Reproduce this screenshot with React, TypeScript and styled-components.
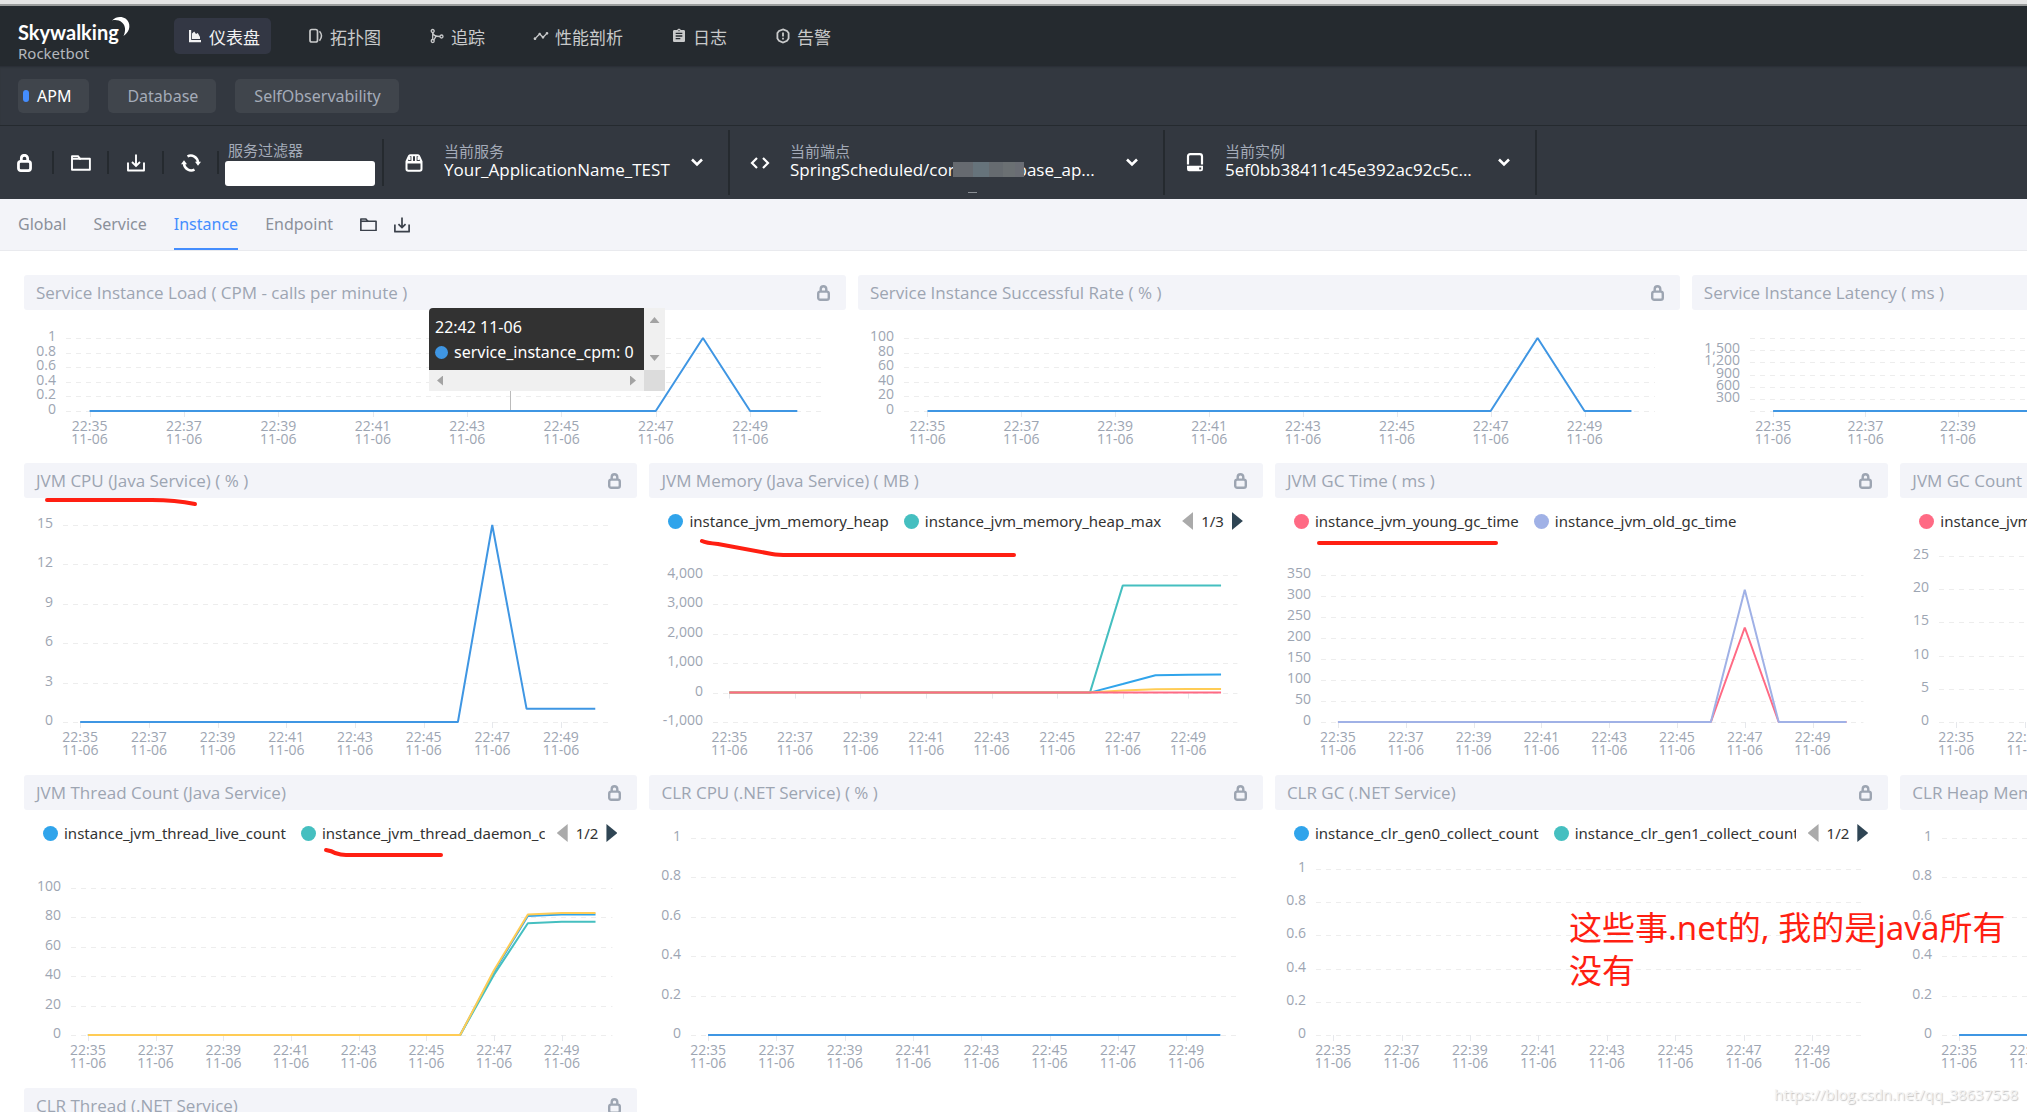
import React, { useLayoutEffect, useRef, useState } from 'react';
import styled, { createGlobalStyle } from 'styled-components';
import { MdAssignment, MdTimeline } from 'react-icons/md';

const FONT = '"Noto Sans", "Noto Sans CJK SC", sans-serif';
const FONT_NARROW = '"Open Sans", "Noto Sans CJK SC", sans-serif';

const GlobalStyle = createGlobalStyle`
  *, *::before, *::after { box-sizing: border-box; }
  body { margin: 0; background: #fff; font-family: ${FONT}; font-size: 16px; }
  button, input, select { font-family: inherit; }
`;

/* ---------- data ---------- */

type Series = { color: string; values: number[] };
type LegendItem = { color: string; name: string };
type Panel = {
  title: string;
  left: number;
  top: number;
  min: number;
  max: number;
  step: number;
  hideEnds?: boolean;
  series: Series[];
  legend?: LegendItem[];
  page?: string;
  tooltip?: boolean;
};

const C = {
  line: '#3f96e3',
  blue: '#30a4eb',
  teal: '#45bfc0',
  yellow: '#ffcc55',
  red: '#ff6a84',
  purple: '#a0b1e6',
};

const flat = (head: number, tail: number[] = []) => [
  ...Array(16 - tail.length).fill(head),
  ...tail,
];

const TOP_ROW: Panel[] = [
  {
    title: 'Service Instance Load ( CPM - calls per minute )',
    left: 42, top: 28, min: 0, max: 1, step: 0.2,
    series: [{ color: C.line, values: flat(0, [1, 0, 0]) }],
    tooltip: true,
  },
  {
    title: 'Service Instance Successful Rate ( % )',
    left: 46, top: 28, min: 0, max: 100, step: 20,
    series: [{ color: C.line, values: flat(0, [100, 0, 0]) }],
  },
  {
    title: 'Service Instance Latency ( ms )',
    left: 58, top: 28, min: 0, max: 1800, step: 300, hideEnds: true,
    series: [{ color: C.line, values: flat(0, [1700, 0, 0]) }],
  },
];

const JVM_ROW: Panel[] = [
  {
    title: 'JVM CPU (Java Service) ( % )',
    left: 39, top: 27, min: 0, max: 15, step: 3,
    series: [{ color: C.line, values: flat(0, [15, 1, 1, 1]) }],
  },
  {
    title: 'JVM Memory (Java Service) ( MB )',
    left: 64, top: 31, min: -1000, max: 4000, step: 1000,
    legend: [
      { color: C.blue, name: 'instance_jvm_memory_heap' },
      { color: C.teal, name: 'instance_jvm_memory_heap_max' },
    ],
    page: '1/3',
    series: [
      { color: C.blue, values: flat(0, [290, 590, 610, 615]) },
      { color: C.teal, values: flat(0, [3640, 3640, 3640, 3640]) },
      { color: C.yellow, values: flat(0, [70, 115, 120, 125]) },
      { color: C.red, values: flat(0) },
    ],
  },
  {
    title: 'JVM GC Time ( ms )',
    left: 46, top: 31, min: 0, max: 350, step: 50,
    legend: [
      { color: C.red, name: 'instance_jvm_young_gc_time' },
      { color: C.purple, name: 'instance_jvm_old_gc_time' },
    ],
    series: [
      { color: C.red, values: flat(0, [225, 0, 0, 0]) },
      { color: C.purple, values: flat(0, [315, 0, 0, 0]) },
    ],
  },
  {
    title: 'JVM GC Count',
    left: 39, top: 12, min: 0, max: 25, step: 5,
    legend: [
      { color: C.red, name: 'instance_jvm_young_gc_count' },
      { color: C.purple, name: 'instance_jvm_old_gc_count' },
    ],
    series: [],
  },
];

const CLR_ROW: Panel[] = [
  {
    title: 'JVM Thread Count (Java Service)',
    left: 47, top: 32, min: 0, max: 100, step: 20,
    legend: [
      { color: C.blue, name: 'instance_jvm_thread_live_count' },
      { color: C.teal, name: 'instance_jvm_thread_daemon_count' },
    ],
    page: '1/2',
    series: [
      { color: C.blue, values: flat(0, [43, 81, 82, 82]) },
      { color: C.teal, values: flat(0, [41, 76, 77, 77]) },
      { color: C.yellow, values: flat(0, [44, 82, 83, 83]) },
    ],
  },
  {
    title: 'CLR CPU (.NET Service) ( % )',
    left: 42, top: 28, min: 0, max: 1, step: 0.2,
    series: [{ color: C.line, values: flat(0) }],
  },
  {
    title: 'CLR GC (.NET Service)',
    left: 41, top: 13, min: 0, max: 1, step: 0.2,
    legend: [
      { color: C.blue, name: 'instance_clr_gen0_collect_count' },
      { color: C.teal, name: 'instance_clr_gen1_collect_count' },
    ],
    page: '1/2',
    series: [],
  },
  {
    title: 'CLR Heap Memory (.NET Service) ( MB )',
    left: 42, top: 28, min: 0, max: 1, step: 0.2,
    series: [{ color: C.line, values: flat(0) }],
  },
];

/* ---------- icons ---------- */

const LockIcon = ({ w, h }: { w: number; h: number }) => (
  <svg width={w} height={h} viewBox="0 0 14 17" fill="none" stroke="currentColor">
    <rect x="1.3" y="7" width="11.4" height="8.7" rx="2.2" strokeWidth="2.6" />
    <path d="M4 7V4.2C4 2.4 5.3 1.2 7 1.2s3 1.2 3 3V7" strokeWidth="2.6" />
  </svg>
);
const FolderIcon = ({ w }: { w: number }) => (
  <svg width={w} height={w * 0.8} viewBox="0 0 20 16" fill="none" stroke="currentColor" strokeWidth="1.9" strokeLinejoin="round">
    <path d="M1 14.8V1.2h6l2 2.6h9.900v11z" />
    <path d="M1 3.800h9" />
  </svg>
);
const DownloadIcon = ({ w }: { w: number }) => (
  <svg width={w} height={w} viewBox="0 0 18 18" fill="none" stroke="currentColor" strokeWidth="1.9">
    <path d="M1 8.500V16.500h16V8.500" strokeLinejoin="round" />
    <path d="M9 .5v11M5 8l4 4 4-4" />
  </svg>
);
const RefreshIcon = () => (
  <svg width="20" height="18" viewBox="0 0 20 18" fill="none" stroke="currentColor" strokeWidth="2.500">
    <path d="M6.500 2.300A7.300 7.300 0 0 1 17 8.500" />
    <path d="M13.500 15.700A7.300 7.300 0 0 1 3 9.500" />
    <path d="M14 7.800h6L17 11.800zM0 10.200h6L3 6.200z" fill="currentColor" stroke="none" />
  </svg>
);
const ServiceIcon = () => (
  <svg width="18" height="18" viewBox="0 0 18 18" fill="none" stroke="currentColor" strokeWidth="2">
    <path d="M1.500 7.500 4 2Q4.500 1.200 5.500 1.200h7Q13.500 1.200 14 2l2.500 5.500V15Q16.500 16.800 14.700 16.800H3.300Q1.500 16.800 1.500 15z" />
    <path d="M1.500 8.200h15" strokeWidth="2.600" />
    <path d="M7.200 1v6M10.800 1v6" strokeWidth="1.600" />
    <path d="M3.500 3h2v3h-2zM12.500 3h2v3h-2z" fill="currentColor" stroke="none" />
  </svg>
);
const CodeIcon = () => (
  <svg width="20" height="12" viewBox="0 0 20 12" fill="none" stroke="currentColor" strokeWidth="2.200">
    <path d="M7 1 2 6l5 5M13 1l5 5-5 5" />
  </svg>
);
const DiskIcon = () => (
  <svg width="18" height="19" viewBox="0 0 18 19" fill="none" stroke="currentColor" strokeWidth="2.200">
    <path d="M2 11.500V3.500Q2 1.200 4.300 1.200h9.400Q16 1.200 16 3.500v8" />
    <path fillRule="evenodd" fill="currentColor" stroke="none" d="M1 12.800h16v3.200q0 2.200-2 2.200H3q-2 0-2-2.200zM13.200 14.400v2h2v-2z" />
  </svg>
);
const ChevronIcon = () => (
  <svg width="12" height="9" viewBox="0 0 12 9" fill="none" stroke="currentColor" strokeWidth="2.600">
    <path d="M1 1.500l5 5 5-5" />
  </svg>
);
const AreaIcon = () => (
  <svg width="16" height="14" viewBox="0 0 16 14" fill="currentColor">
    <path d="M2 1h2.200v10H14v2.200H2z" />
    <path d="M5 10V4.500L7.200 2.500 9 5l1.800-1 2.200 4v2z" />
  </svg>
);
const TopologyIcon = () => (
  <svg width="16" height="16" viewBox="0 0 16 16" fill="none" stroke="currentColor" strokeWidth="1.700">
    <rect x="2" y="1.500" width="7.500" height="12.500" rx="1.800" />
    <path d="M11.500 3.200q4 4.500 0 9.600" strokeWidth="1.500" />
  </svg>
);
const TraceIcon = () => (
  <svg width="16" height="16" viewBox="0 0 16 16" fill="none" stroke="currentColor" strokeWidth="1.300">
    <circle cx="3.700" cy="3" r="1.500" />
    <circle cx="3.700" cy="13" r="1.500" />
    <circle cx="12.500" cy="8.500" r="1.500" />
    <path d="M3.700 4.500v7M3.700 5Q4.500 8.500 11 8.500M4.800 12 7 8.300" />
  </svg>
);
const AlarmIcon = () => (
  <svg width="16" height="16" viewBox="0 0 16 16" fill="none" stroke="currentColor" strokeWidth="1.800">
    <path d="M8 1.400 12 3 13.600 5v5.500L12 12.800 8 14.500 4 12.800 2.400 10.500V5L4 3z" />
    <path d="M8 4.500v4M8 9.800v1.800" />
  </svg>
);
const MoonIcon = styled.svg`
  position: absolute;
  left: 94px;
  top: 5px;
`;

/* ---------- header ---------- */

const Page = styled.div`
  position: relative;
  height: 100vh;
  overflow: hidden;
  background: #fff;
`;
const WindowEdge = styled.div`
  height: 6px;
  background: #e4e4e4;
  border-bottom: 2px solid #9a9c9c;
`;
const Header = styled.header`
  display: flex;
  align-items: center;
  height: 60px;
  padding: 0 18px;
  background: #252a2f;
`;
const Brand = styled.a`
  position: relative;
  display: block;
  width: 156px;
  padding-top: 8px;
  color: #fff;
  text-decoration: none;
`;
const BrandName = styled.div`
  font-family: Lato, ${FONT};
  font-size: 20px;
  font-weight: 700;
  line-height: 26px;
`;
const BrandSub = styled.div`
  font-size: 15px;
  line-height: 16px;
  color: #b4b7bd;
`;
const Nav = styled.nav`
  display: flex;
  gap: 24px;
`;
const NavLink = styled.a<{ $active?: boolean }>`
  display: flex;
  align-items: center;
  gap: 6px;
  height: 36px;
  padding: 0 11px 0 13px;
  border-radius: 5px;
  font-size: 17px;
  text-decoration: none;
  color: ${(p) => (p.$active ? '#f2f2f3' : '#c9cacb')};
  background: ${(p) => (p.$active ? '#333744' : 'transparent')};
`;

const GroupBar = styled.div`
  display: flex;
  align-items: center;
  gap: 19px;
  height: 60px;
  padding: 0 18px;
  background: #333840;
  border-bottom: 1px solid #252a2f;
  box-shadow: inset 0 2px 2px -1px #292e34;
`;
const GroupButton = styled.button<{ $active?: boolean }>`
  position: relative;
  height: 34px;
  padding: 0 18px 0 19px;
  border: 0;
  border-radius: 5px;
  font-size: 16px;
  color: ${(p) => (p.$active ? '#fff' : '#a4abb8')};
  background: #40454c;
  ${(p) =>
    p.$active &&
    `&::before {
      content: '';
      position: absolute;
      left: 5px;
      top: 11px;
      width: 6px;
      height: 12px;
      border-radius: 3px;
      background: #448dfe;
    }`}
`;

/* ---------- toolbar ---------- */

const Toolbar = styled.div`
  display: flex;
  align-items: center;
  height: 73px;
  background: #333840;
  color: #fff;
`;
const ToolCell = styled.div`
  display: flex;
  justify-content: center;
  width: 55px;
  height: 23px;
  border-right: 2px solid #252a2f;
  &:first-child { width: 54px; padding-right: 4px; }
`;
const IconButton = styled.button`
  display: flex;
  align-items: center;
  justify-content: center;
  padding: 0;
  border: 0;
  background: none;
  color: inherit;
`;
const Filter = styled.label`
  display: flex;
  flex-direction: column;
  gap: 2px;
  height: 47px;
  padding: 2px 7px 0 6px;
  border-right: 2px solid #252a2f;
`;
const Caption = styled.span`
  padding: 0 3px;
  font-size: 15px;
  line-height: 18px;
  color: #a4abb8;
`;
const FilterInput = styled.input`
  flex: none;
  width: 150px;
  height: 25px;
  border: 0;
  border-radius: 3px;
  background: #fff;
`;
const Picker = styled.label<{ $width: number }>`
  position: relative;
  display: flex;
  align-items: center;
  width: ${(p) => p.$width}px;
  height: 65px;
  padding: 0 25px 0 20px;
  border-right: 2px solid #252a2f;
`;
const PickerIcon = styled.span`
  display: flex;
  justify-content: center;
  width: 20px;
  margin-right: 17px;
`;
const PickerBody = styled.span`
  display: flex;
  flex: 1;
  flex-direction: column;
  min-width: 0;
  padding-bottom: 4px;
`;
const PickerSelect = styled.select`
  appearance: none;
  width: 100%;
  height: 20px;
  padding: 0 3px;
  border: 0;
  font-family: ${FONT_NARROW};
  font-size: 17px;
  line-height: 20px;
  color: #fff;
  background: none;
`;
const Mosaic = styled.span`
  position: absolute;
  left: 223px;
  top: 32px;
  width: 71px;
  height: 15px;
  background: linear-gradient(90deg, #666a70 0 20px, #66737b 20px 36px, #666b70 36px 50px, #6b7073 50px 62px, #6a6d74 62px);
  &::after {
    content: '';
    position: absolute;
    left: 15px;
    top: 30px;
    width: 9px;
    height: 1px;
    background: #8b8f95;
  }
`;

/* ---------- tabs ---------- */

const Tabs = styled.nav`
  display: flex;
  align-items: center;
  gap: 27px;
  height: 52px;
  padding: 0 18px;
  background: #f3f4f9;
  border-bottom: 1px solid #e9eaee;
`;
const Tab = styled.a<{ $active?: boolean }>`
  height: 51px;
  font-size: 16px;
  line-height: 50px;
  text-decoration: none;
  color: ${(p) => (p.$active ? '#448dfe' : '#8b909a')};
  border-bottom: 2px solid ${(p) => (p.$active ? '#448dfe' : 'transparent')};
`;
const TabTools = styled.div`
  display: flex;
  gap: 17px;
  color: #3a404b;
`;

/* ---------- dashboard ---------- */

const Dashboard = styled.main`
  display: flex;
  flex-direction: column;
  gap: 12px;
  width: 125vw;
  padding: 24px 20px 0 24px;
`;
const Row = styled.div<{ $cols: number }>`
  display: grid;
  grid-template-columns: repeat(${(p) => p.$cols}, minmax(0, 1fr));
  gap: 12px;
`;
const Card = styled.section`
  position: relative;
`;
const CardHead = styled.div`
  display: flex;
  align-items: center;
  justify-content: space-between;
  height: 35px;
  padding: 0 16px 0 12px;
  border-radius: 3px;
  color: #9da5b2;
  background: #f3f4f9;
`;
const CardTitle = styled.h2`
  margin: 0;
  font-family: ${FONT_NARROW};
  font-size: 17px;
  font-weight: 400;
  line-height: 23px;
`;
const Legend = styled.div`
  display: flex;
  align-items: center;
  height: 46px;
  padding: 0 20px 0 19px;
`;
const LegendList = styled.div`
  display: flex;
  flex: 1;
  gap: 15px;
  min-width: 0;
  overflow: hidden;
`;
const LegendButton = styled.button`
  display: flex;
  flex: none;
  align-items: center;
  gap: 6px;
  padding: 0;
  border: 0;
  background: none;
  font-size: 15px;
  line-height: 22px;
  color: #333;
`;
const Dot = styled.span<{ $color: string; $size: number }>`
  flex: none;
  width: ${(p) => p.$size}px;
  height: ${(p) => p.$size}px;
  border-radius: 50%;
  background: ${(p) => p.$color};
`;
const Pager = styled.div`
  display: flex;
  align-items: center;
  gap: 8px;
  padding-left: 12px;
  font-size: 15px;
  color: #333;
`;
const PageArrow = styled.button<{ $next?: boolean }>`
  width: 11px;
  height: 18px;
  padding: 0;
  border: 0;
  background: ${(p) => (p.$next ? '#2f4554' : '#aaa')};
  clip-path: ${(p) => (p.$next ? 'polygon(0 0, 100% 50%, 0 100%)' : 'polygon(100% 0, 0 50%, 100% 100%)')};
`;
const Plot = styled.svg`
  display: block;
  width: 100%;
  font-family: ${FONT_NARROW};
  font-size: 14px;
  fill: #9da5b2;
`;

const Tooltip = styled.div`
  position: absolute;
  left: 405px;
  top: 33px;
  display: grid;
  grid-template-columns: 215px 21px;
  grid-template-rows: 62px 21px;
  border-radius: 4px 0 0 0;
  overflow: hidden;
`;
const TooltipBody = styled.div`
  padding: 7px 6px 5px;
  font-size: 16px;
  line-height: 25px;
  white-space: nowrap;
  color: #fff;
  background: #323232;
`;
const TooltipLine = styled.div`
  display: flex;
  align-items: center;
  gap: 6px;
`;
const ScrollTrack = styled.div<{ $vertical?: boolean }>`
  display: flex;
  flex-direction: ${(p) => (p.$vertical ? 'column' : 'row')};
  align-items: center;
  justify-content: space-between;
  padding: ${(p) => (p.$vertical ? '9px 0' : '0 8px')};
  background: #f0f0f0;
`;
const Arrow = styled.span<{ $clip: string; $flat?: boolean }>`
  width: ${(p) => (p.$flat ? 10 : 6)}px;
  height: ${(p) => (p.$flat ? 6 : 10)}px;
  background: #a3a3a3;
  clip-path: polygon(${(p) => p.$clip});
`;
const ScrollCorner = styled.div`
  background: #dcdcdc;
`;

/* ---------- annotations ---------- */

const Markup = styled.svg`
  position: absolute;
  left: 0;
  top: 0;
  width: 100%;
  height: 100%;
  pointer-events: none;
`;
const Note = styled.p`
  position: absolute;
  left: 1569px;
  top: 906px;
  width: 450px;
  margin: 0;
  font-size: 33px;
  line-height: 43px;
  color: #ff1f12;
`;
const Watermark = styled.span`
  position: absolute;
  right: 9px;
  bottom: 6px;
  font-family: ${FONT_NARROW};
  font-size: 15px;
  line-height: 24px;
  color: #f4f4f4;
  text-shadow: 1px 1px 1px #c4c4c4;
`;

const RIGHT = 25;

function Chart({ panel, height, bottom }: { panel: Panel; height: number; bottom: number }) {
  const ref = useRef<SVGSVGElement>(null);
  const [width, setWidth] = useState(600);

  useLayoutEffect(() => {
    const node = ref.current;
    if (!node) return;
    const measure = () => setWidth(node.getBoundingClientRect().width);
    measure();
    const observer = new ResizeObserver(measure);
    observer.observe(node);
    return () => observer.disconnect();
  }, []);

  const { left, top, min, max, step, series, hideEnds } = panel;
  const axis = height - bottom;
  const right = width - RIGHT;
  const band = (right - left) / 16;
  const x = (i: number) => left + band * (i + 0.5);
  const y = (v: number) => axis - ((v - min) / (max - min)) * (axis - top);
  const ticks = Array.from({ length: Math.round((max - min) / step) + 1 }, (_, i) =>
    Number((min + i * step).toFixed(2)),
  );
  const crisp = (v: number) => Math.round(v) + 0.5;

  return (
    <Plot ref={ref} height={height}>
      {ticks.map((t) => (
        <line key={t} x1={left} x2={right} y1={crisp(y(t))} y2={crisp(y(t))} stroke="#ededed" strokeDasharray="5 5" />
      ))}
      {ticks.map((t, i) =>
        hideEnds && (i === 0 || i === ticks.length - 1) ? null : (
          <text key={t} x={left - 10} y={Math.round(y(t)) + 3} textAnchor="end">
            {t.toLocaleString('en-US')}
          </text>
        ),
      )}
      {[0, 2, 4, 6, 8, 10, 12, 14].map((i) => (
        <g key={i} textAnchor="middle">
          <line x1={crisp(x(i))} x2={crisp(x(i))} y1={y(0)} y2={y(0) + 6} stroke="#e6e8ec" />
          <text x={x(i)} y={axis + 20}>{`22:${35 + i}`}</text>
          <text x={x(i)} y={axis + 33}>11-06</text>
        </g>
      ))}
      {panel.tooltip && (
        <line x1={crisp(x(8.9))} x2={crisp(x(8.9))} y1={top} y2={axis} stroke="#bbb" />
      )}
      {series.map((s, k) => (
        <polyline
          key={k}
          fill="none"
          stroke={s.color}
          strokeWidth="2"
          strokeLinejoin="bevel"
          points={s.values.map((v, i) => `${x(i)},${y(v)}`).join(' ')}
        />
      ))}
    </Plot>
  );
}

function ChartCard({ panel, height, bottom = 41 }: { panel: Panel; height: number; bottom?: number }) {
  return (
    <Card>
      <CardHead>
        <CardTitle>{panel.title}</CardTitle>
        <IconButton aria-label="Lock panel">
          <LockIcon w={13} h={16} />
        </IconButton>
      </CardHead>
      {panel.legend && (
        <Legend>
          <LegendList>
            {panel.legend.map((item) => (
              <LegendButton key={item.name}>
                <Dot $color={item.color} $size={15} />
                {item.name}
              </LegendButton>
            ))}
          </LegendList>
          {panel.page && (
            <Pager>
              <PageArrow aria-label="Previous" />
              {panel.page}
              <PageArrow $next aria-label="Next" />
            </Pager>
          )}
        </Legend>
      )}
      <Chart panel={panel} height={panel.legend ? height - 46 : height} bottom={bottom} />
      {panel.tooltip && (
        <Tooltip>
          <TooltipBody>
            <div>22:42 11-06</div>
            <TooltipLine>
              <Dot $color={C.line} $size={13} />
              service_instance_cpm: 0
            </TooltipLine>
          </TooltipBody>
          <ScrollTrack $vertical>
            <Arrow $flat $clip="50% 0, 100% 100%, 0 100%" />
            <Arrow $flat $clip="0 0, 100% 0, 50% 100%" />
          </ScrollTrack>
          <ScrollTrack>
            <Arrow $clip="100% 0, 100% 100%, 0 50%" />
            <Arrow $clip="0 0, 100% 50%, 0 100%" />
          </ScrollTrack>
          <ScrollCorner />
        </Tooltip>
      )}
    </Card>
  );
}

const NAV = [
  { label: '仪表盘', icon: <AreaIcon /> },
  { label: '拓扑图', icon: <TopologyIcon /> },
  { label: '追踪', icon: <TraceIcon /> },
  { label: '性能剖析', icon: <MdTimeline size={16} /> },
  { label: '日志', icon: <MdAssignment size={16} /> },
  { label: '告警', icon: <AlarmIcon /> },
];

const PICKERS = [
  { label: '当前服务', value: 'Your_ApplicationName_TEST', icon: <ServiceIcon />, width: 346 },
  {
    label: '当前端点',
    value: `SpringScheduled/cor${'\u00a0'.repeat(14)}base_ap...`,
    icon: <CodeIcon />,
    width: 435,
    masked: true,
  },
  { label: '当前实例', value: '5ef0bb38411c45e392ac92c5c...', icon: <DiskIcon />, width: 372 },
];

export default function App() {
  return (
    <Page>
      <GlobalStyle />
      <WindowEdge />
      <Header>
        <Brand href="#">
          <BrandName>Skywalking</BrandName>
          <BrandSub>Rocketbot</BrandSub>
          <MoonIcon width="19" height="22" viewBox="0 0 19 22" fill="#fff">
            <path d="M0 4.500C4 .2 10 0 13.500 2.600 19 6.600 19 15.500 11.500 20 14 14.500 13.500 9.500 10 6.500 7.200 4.100 3.500 3.600 0 4.500z" />
          </MoonIcon>
        </Brand>
        <Nav>
          {NAV.map((n, i) => (
            <NavLink key={n.label} href="#" $active={i === 0}>
              {n.icon}
              {n.label}
            </NavLink>
          ))}
        </Nav>
      </Header>
      <GroupBar>
        <GroupButton $active>APM</GroupButton>
        <GroupButton>Database</GroupButton>
        <GroupButton>SelfObservability</GroupButton>
      </GroupBar>
      <Toolbar>
        <ToolCell><IconButton aria-label="Lock"><LockIcon w={15} h={18} /></IconButton></ToolCell>
        <ToolCell><IconButton aria-label="Open"><FolderIcon w={20} /></IconButton></ToolCell>
        <ToolCell><IconButton aria-label="Export"><DownloadIcon w={18} /></IconButton></ToolCell>
        <ToolCell><IconButton aria-label="Refresh"><RefreshIcon /></IconButton></ToolCell>
        <Filter>
          <Caption>服务过滤器</Caption>
          <FilterInput type="text" />
        </Filter>
        {PICKERS.map((p) => (
          <Picker key={p.label} $width={p.width}>
            <PickerIcon>{p.icon}</PickerIcon>
            <PickerBody>
              <Caption>{p.label}</Caption>
              <PickerSelect defaultValue={p.value}>
                <option>{p.value}</option>
              </PickerSelect>
            </PickerBody>
            <ChevronIcon />
            {p.masked && <Mosaic />}
          </Picker>
        ))}
      </Toolbar>
      <Tabs>
        <Tab href="#">Global</Tab>
        <Tab href="#">Service</Tab>
        <Tab href="#" $active>Instance</Tab>
        <Tab href="#">Endpoint</Tab>
        <TabTools>
          <IconButton aria-label="Open template"><FolderIcon w={17} /></IconButton>
          <IconButton aria-label="Export template"><DownloadIcon w={16} /></IconButton>
        </TabTools>
      </Tabs>
      <Dashboard>
        <Row $cols={3}>
          {TOP_ROW.map((p) => <ChartCard key={p.title} panel={p} height={141} bottom={40} />)}
        </Row>
        <Row $cols={4}>
          {JVM_ROW.map((p) => <ChartCard key={p.title} panel={p} height={265} />)}
        </Row>
        <Row $cols={4}>
          {CLR_ROW.map((p) => <ChartCard key={p.title} panel={p} height={266} />)}
        </Row>
        <Row $cols={4}>
          <ChartCard
            panel={{ title: 'CLR Thread (.NET Service)', left: 42, top: 28, min: 0, max: 1, step: 0.2, series: [] }}
            height={266}
          />
        </Row>
      </Dashboard>
      <Markup fill="none" stroke="#ff1f12" strokeWidth="4" strokeLinecap="round" strokeLinejoin="round">
        <path d="M47 500H152Q175 500 195 504" />
        <path d="M702 541Q706 543 718 544L772 554Q778 555 788 555H1014" />
        <path d="M1319 543H1496" />
        <path d="M326 850Q332 851 335 853Q341 855 346 855H441" />
      </Markup>
      <Note>这些事.net的, 我的是java所有没有</Note>
      <Watermark>https://blog.csdn.net/qq_38637558</Watermark>
    </Page>
  );
}
